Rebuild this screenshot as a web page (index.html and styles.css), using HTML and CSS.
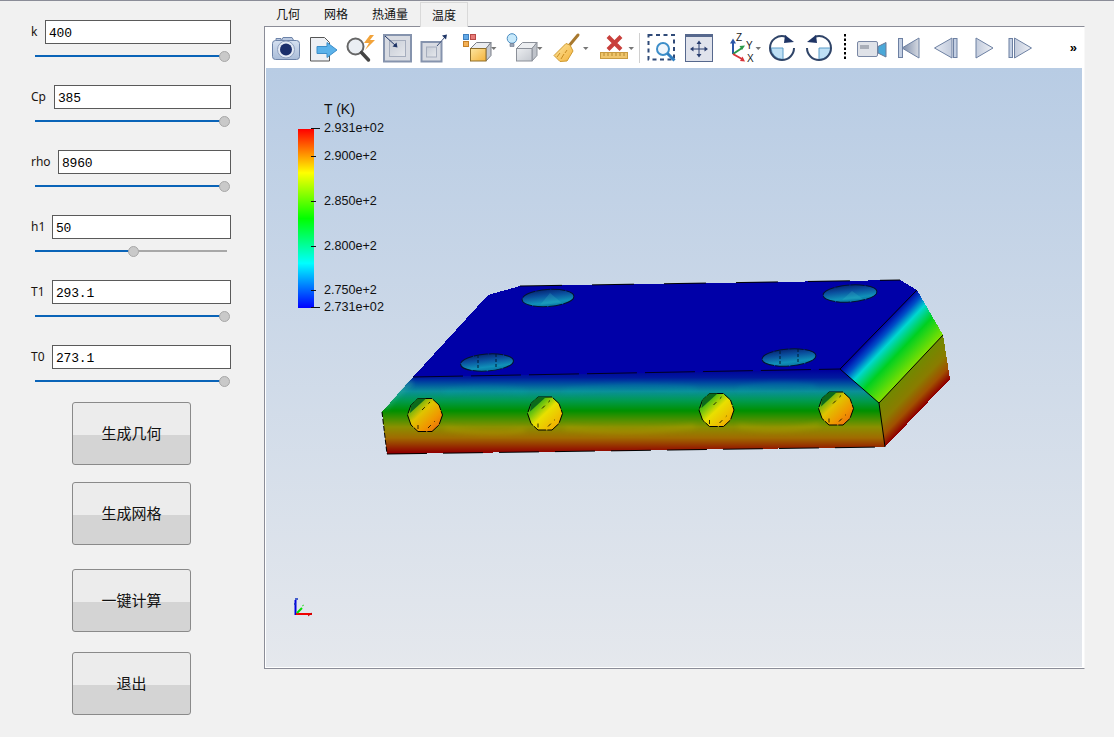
FILE: index.html
```html
<!DOCTYPE html>
<html lang="zh">
<head>
<meta charset="utf-8">
<title>温度</title>
<link rel="stylesheet" href="styles.css">
</head>
<body>
<svg class="shared-defs" aria-hidden="true">
  <defs>
    <linearGradient id="gCam" x1="0" y1="0" x2="0" y2="1"><stop offset="0" stop-color="#d5e0f0"/><stop offset="1" stop-color="#a9bcd8"/></linearGradient>
    <linearGradient id="gGold" x1="0" y1="0" x2="1" y2="1"><stop offset="0" stop-color="#fde6a0"/><stop offset="1" stop-color="#f4b23a"/></linearGradient>
    <linearGradient id="gGray" x1="0" y1="0" x2="1" y2="1"><stop offset="0" stop-color="#eceef1"/><stop offset="1" stop-color="#c4c8cf"/></linearGradient>
    <linearGradient id="gPanel" x1="0" y1="0" x2="1" y2="1"><stop offset="0" stop-color="#c6ccd6"/><stop offset="1" stop-color="#e6e8ec"/></linearGradient>
    <linearGradient id="gTriL" x1="0" y1="0" x2="1" y2="0"><stop offset="0" stop-color="#7b8ba8"/><stop offset="1" stop-color="#d6dae2"/></linearGradient>
    <linearGradient id="gTriLight" x1="0" y1="0" x2="1" y2="0"><stop offset="0" stop-color="#e6eaf2"/><stop offset="1" stop-color="#c2cbdc"/></linearGradient>
    <linearGradient id="gTriR" x1="0" y1="0" x2="1" y2="0"><stop offset="0" stop-color="#c2cbdc"/><stop offset="1" stop-color="#eef0f5"/></linearGradient>
  </defs>
</svg>

<div class="app">
  <aside class="side">
    <div class="field">
      <div class="row"><label class="lbl lbl-k">k</label><div class="input">400</div></div>
      <div class="slider"><div class="fill" style="width:98.5%"></div><div class="thumb" style="left:98.5%"></div></div>
    </div>
    <div class="field">
      <div class="row"><label class="lbl lbl-cp">Cp</label><div class="input">385</div></div>
      <div class="slider"><div class="fill" style="width:98.5%"></div><div class="thumb" style="left:98.5%"></div></div>
    </div>
    <div class="field">
      <div class="row"><label class="lbl lbl-rho">rho</label><div class="input">8960</div></div>
      <div class="slider"><div class="fill" style="width:98.5%"></div><div class="thumb" style="left:98.5%"></div></div>
    </div>
    <div class="field">
      <div class="row"><label class="lbl lbl-t">h1</label><div class="input">50</div></div>
      <div class="slider"><div class="fill" style="width:51%"></div><div class="thumb" style="left:51%"></div></div>
    </div>
    <div class="field">
      <div class="row"><label class="lbl lbl-t">T1</label><div class="input">293.1</div></div>
      <div class="slider"><div class="fill" style="width:98.5%"></div><div class="thumb" style="left:98.5%"></div></div>
    </div>
    <div class="field">
      <div class="row"><label class="lbl lbl-t">T0</label><div class="input">273.1</div></div>
      <div class="slider"><div class="fill" style="width:98.5%"></div><div class="thumb" style="left:98.5%"></div></div>
    </div>
    <button class="btn btn-a">生成几何</button>
    <button class="btn btn-b">生成网格</button>
    <button class="btn btn-c">一键计算</button>
    <button class="btn btn-d">退出</button>
  </aside>

  <main class="main">
    <nav class="tabs">
      <div class="tab">几何</div>
      <div class="tab">网格</div>
      <div class="tab">热通量</div>
      <div class="tab tab-on">温度</div>
    </nav>
    <section class="pane">
      <div class="toolbar">
        <svg class="ic w37" viewBox="268 27 37 41"><path d="M276 41v-2.500h5v2.500M281 41l2-3.500h9l2 3.500" fill="#b9c8e0" stroke="#6d83a8"/><rect x="272.500" y="40.500" width="27" height="19" rx="3" fill="url(#gCam)" stroke="#6d83a8"/><circle cx="286" cy="49.500" r="8.500" fill="#e3e9f4" stroke="#8ea0bf"/><circle cx="286" cy="49.500" r="6" fill="#1b2f6b"/></svg>
        <svg class="ic w36" viewBox="305 27 36 41"><path d="M310.500 37.500h14l5 5v18.500h-19z" fill="#eef0f4" stroke="#555"/><path d="M317 46.500h10v-4l10 7.500-10 7.500v-4h-10z" fill="#5bb2ea" stroke="#3d8ec9"/></svg>
        <svg class="ic w37" viewBox="341 27 37 41"><circle cx="355.500" cy="46.500" r="8" fill="#eaeef3" stroke="#666" stroke-width="2"/><path d="M361.500 52.500l7 7.500" stroke="#444" stroke-width="3.500" stroke-linecap="round"/><path d="M370 35l-6 8h5l-4 7 10-10h-5l4-5z" fill="#f2a33a"/></svg>
        <svg class="ic w37" viewBox="378 27 37 41"><rect x="384" y="35" width="27" height="26.500" fill="#d8dbe2" stroke="#8593ad" stroke-width="2"/><rect x="389.500" y="40.500" width="16" height="16" fill="url(#gPanel)" stroke="#a5adbd"/><path d="M385 36l11 10" stroke="#1f3566"/><path d="M397.500 47.500l-5-1 4-4z" fill="#1f3566"/></svg>
        <svg class="ic w37" viewBox="415 27 37 41"><rect x="421.500" y="42" width="20" height="19.500" fill="#d8dbe2" stroke="#8593ad" stroke-width="2"/><rect x="426.500" y="47" width="10" height="10" fill="url(#gPanel)" stroke="#a5adbd"/><path d="M437 46l8-9" stroke="#3c4f78"/><path d="M447 34.500l-1 5-4-4z" fill="#1f3566"/></svg>
        <svg class="ic w49" viewBox="452 27 49 41"><rect x="463.500" y="34.500" width="5" height="5" fill="#63a9e6" stroke="#3e7fc0"/><rect x="470.500" y="34.500" width="5" height="5" fill="#e87b78" stroke="#b84a48"/><rect x="463.500" y="41.500" width="5" height="5" fill="#f3b055" stroke="#c58028"/><path d="M470.500 48.500l6-6h14.500l-5 6z" fill="#eaecef" stroke="#7a7f88"/><path d="M486 48.500l5-6v13l-5 5.500z" fill="#c4c8cf" stroke="#7a7f88"/><rect x="470.500" y="48.500" width="15.500" height="12.500" fill="url(#gGold)" stroke="#8f6f2a"/><path d="M491 47h5.500l-2.750 3z" fill="#777"/></svg>
        <svg class="ic w47" viewBox="501 27 47 41"><circle cx="512" cy="38.500" r="4.800" fill="#c7e9fb" stroke="#4b8cc0"/><path d="M510 43.500h4v3h-4z" fill="#9aa6b8" stroke="#66738a" stroke-width=".6"/><path d="M516.500 48.500l6-6h14.500l-5 6z" fill="#eceef1" stroke="#8b9099"/><path d="M532 48.500l5-6v13l-5 5.500z" fill="#bfc3ca" stroke="#8b9099"/><rect x="516.500" y="48.500" width="15.500" height="12.500" fill="url(#gGray)" stroke="#8b9099"/><path d="M537 47h5.500l-2.750 3z" fill="#777"/></svg>
        <svg class="ic w44" viewBox="548 27 44 41"><path d="M578 35l-10 12" stroke="#a8792f" stroke-width="3" stroke-linecap="round"/><path d="M570 45l-4-1.500-12 12 6 6 7-.5 6-10z" fill="url(#gGold)" stroke="#cf9a30"/><path d="M560 53l-3 4M564 54l-3 5M567 50l-2 3" stroke="#c98d22"/><path d="M583 47h5.500l-2.750 3z" fill="#777"/></svg>
        <svg class="ic w47" viewBox="592 27 47 41"><path d="M608 36.500l13 13M621 36.500l-13 13" stroke="#c8403c" stroke-width="4"/><rect x="600.500" y="52.500" width="27" height="6" fill="#efc56c" stroke="#c89a40"/><path d="M604 53v3M608 53v3M612 53v3M616 53v3M620 53v3M624 53v3" stroke="#b48930"/><path d="M628.500 47h5.500l-2.750 3z" fill="#777"/></svg>
        <div class="sep"></div>
        <svg class="ic w38" viewBox="642 27 38 41"><rect x="648.500" y="35" width="25.500" height="24.500" fill="none" stroke="#2f4a78" stroke-width="2" stroke-dasharray="4 3.500"/><circle cx="663" cy="49" r="6" fill="#eff5fb" stroke="#3d8ec9" stroke-width="2"/><path d="M667.500 53.500l7 7" stroke="#2f7fc0" stroke-width="3"/></svg>
        <svg class="ic w37" viewBox="680 27 37 41"><rect x="685.500" y="35.500" width="27" height="26" fill="#e0e3ec" stroke="#56688d"/><rect x="685" y="34" width="28" height="3" fill="#56688d"/><path d="M699 43v12M692.500 49h13" stroke="#2a3f70"/><path d="M699 40.500l-2.500 3.500h5zM699 57.500l-2.500-3.500h5zM690 49l3.500-2.500v5zM708 49l-3.500-2.500v5z" fill="#2a3f70"/></svg>
        <svg class="ic w46" viewBox="717 27 46 41"><path d="M733 54V42" stroke="#2a56a8" stroke-width="2"/><path d="M733 38.500l-3 5h6z" fill="#2a56a8"/><path d="M733 54l9-6" stroke="#2a9a48" stroke-width="2"/><path d="M745 45.500l-5.500.5 2.500 4z" fill="#2a9a48"/><path d="M733 54l9 5" stroke="#d8343a" stroke-width="2"/><path d="M745 61.500l-2.500-5-2.500 4.500z" fill="#d8343a"/><text x="736" y="41" class="axis-txt">Z</text><text x="746" y="49" class="axis-txt">Y</text><text x="747" y="62" class="axis-txt">X</text><path d="M755.500 47h5.500l-2.750 3z" fill="#777"/></svg>
        <svg class="ic w37" viewBox="763 27 37 41"><path d="M783 48H771a12 12 0 0 0 12 11.500z" fill="#bfe0f5" stroke="#5a9cc8"/><path d="M786 36.700A12 12 0 0 0 770 48a12 12 0 0 0 24 0" fill="none" stroke="#2f4468" stroke-width="2"/><path d="M785 35l9 7-10 1z" fill="#1f3566"/></svg>
        <svg class="ic w37" viewBox="800 27 37 41"><path d="M819 48H831a12 12 0 0 1-12 11.500z" fill="#bfe0f5" stroke="#5a9cc8"/><path d="M815 36.700A12 12 0 0 1 831 48a12 12 0 0 1-24 0" fill="none" stroke="#2f4468" stroke-width="2"/><path d="M816 35l-9 7 10 1z" fill="#1f3566"/></svg>
        <svg class="ic w15" viewBox="837 27 15 41"><path d="M845 34v26.500" stroke="#000" stroke-width="2" stroke-dasharray="2.500 2"/></svg>
        <svg class="ic w38" viewBox="852 27 38 41"><rect x="857.500" y="41.500" width="20" height="15" rx="1.500" fill="#dfe2e8" stroke="#7a88a5"/><rect x="860" y="45" width="9" height="4" fill="#a9aeb8"/><path d="M878 46.500l8-4v14.500l-8-4z" fill="#4aa8d8" stroke="#6a7a98"/></svg>
        <svg class="ic w37" viewBox="890 27 37 41"><path d="M902 48l17-10v20z" fill="url(#gTriL)" stroke="#6d80a2"/><rect x="898.500" y="38.500" width="4" height="19" fill="#c3cfe3" stroke="#6d80a2"/></svg>
        <svg class="ic w38" viewBox="927 27 38 41"><path d="M934.500 48l17.500-10v20z" fill="url(#gTriLight)" stroke="#6d80a2"/><rect x="953.500" y="38.500" width="3.500" height="19" fill="#c3cfe3" stroke="#6d80a2"/></svg>
        <svg class="ic w37" viewBox="965 27 37 41"><path d="M976 38l17 10-17 10z" fill="url(#gTriR)" stroke="#6d80a2"/></svg>
        <svg class="ic w37" viewBox="1002 27 37 41"><rect x="1009" y="38.500" width="3.500" height="19" fill="#c3cfe3" stroke="#6d80a2"/><path d="M1014.500 38l17 10-17 10z" fill="url(#gTriR)" stroke="#6d80a2"/></svg>
        <span class="more">»</span>
      </div>

      <div class="view">
        <svg class="scene" viewBox="266 68 816 598" width="816" height="598">
          <defs>
            <linearGradient id="rainbow" x1="0" y1="0" x2="0" y2="1">
              <stop offset="0" stop-color="#ff0000"/><stop offset=".245" stop-color="#ffff00"/><stop offset=".5" stop-color="#00ff00"/><stop offset=".75" stop-color="#00ffff"/><stop offset="1" stop-color="#0000ff"/>
            </linearGradient>
            <linearGradient id="front" gradientUnits="userSpaceOnUse" x1="0" y1="370" x2="0" y2="455">
              <stop offset="0" stop-color="#00009c"/><stop offset=".09" stop-color="#001a9e"/><stop offset=".15" stop-color="#0048a0"/><stop offset=".25" stop-color="#0a8f9a"/><stop offset=".36" stop-color="#009a50"/><stop offset=".48" stop-color="#009000"/><stop offset=".67" stop-color="#8a9000"/><stop offset=".8" stop-color="#a06a00"/><stop offset=".97" stop-color="#8f0000"/>
            </linearGradient>
            <linearGradient id="chamfer" gradientUnits="userSpaceOnUse" x1="878" y1="330" x2="915" y2="365">
              <stop offset="0" stop-color="#0000a8"/><stop offset=".16" stop-color="#0050c8"/><stop offset=".33" stop-color="#00d8d0"/><stop offset=".6" stop-color="#00d020"/><stop offset="1" stop-color="#84e000"/>
            </linearGradient>
            <linearGradient id="rightFace" gradientUnits="userSpaceOnUse" x1="911" y1="369" x2="936" y2="393">
              <stop offset="0" stop-color="#6f8a00"/><stop offset=".45" stop-color="#8a7c00"/><stop offset=".75" stop-color="#a05000"/><stop offset="1" stop-color="#8f0000"/>
            </linearGradient>
            <linearGradient id="topHole" x1="0" y1="0" x2=".15" y2="1">
              <stop offset="0" stop-color="#041e6c"/><stop offset=".4" stop-color="#0a4f9e"/><stop offset=".82" stop-color="#1090b8"/><stop offset="1" stop-color="#0a7ea8"/>
            </linearGradient>
            <linearGradient id="holeWarm" x1="0" y1="0" x2="1" y2="1">
              <stop offset="0" stop-color="#0f7a1e"/><stop offset=".2" stop-color="#5cb010"/><stop offset=".42" stop-color="#e0c400"/><stop offset=".68" stop-color="#f09800"/><stop offset="1" stop-color="#e85c10"/>
            </linearGradient>
            <linearGradient id="holeCool" x1="0" y1="0" x2="1" y2="1">
              <stop offset="0" stop-color="#0f7a1e"/><stop offset=".28" stop-color="#5cc010"/><stop offset=".5" stop-color="#e8e000"/><stop offset=".8" stop-color="#f0b800"/><stop offset="1" stop-color="#e88c10"/>
            </linearGradient>
            <filter id="soft" x="-20%" y="-100%" width="140%" height="300%"><feGaussianBlur stdDeviation="2.500"/></filter>
            <clipPath id="frontClip"><path d="M382 412L412 377 840 369 879 403 885 447 387 454z"/></clipPath>
            <g id="holeShape">
              <path d="M-7-16.500L7-16.500 14-10 17.500 0 14 10 7 16.500-7 16.500-14 10-17.500 0-14-10z" stroke="#000" stroke-width="1" stroke-dasharray="14 1"/>
              <path d="M-7-16.500L1-16.500-15-2-14-10z" fill="#0c6a1c"/>
              <path d="M-7 14V8M3 13L10 6M-3 -5L5 -13" stroke="#000" stroke-width=".8" stroke-dasharray="4 5" fill="none"/>
            </g>
          </defs>

          <text x="324" y="114" class="bar-title">T (K)</text>
          <rect x="298" y="129" width="16" height="179" fill="url(#rainbow)"/>
          <g stroke="#111" stroke-width="1">
            <path d="M311 128.500h9M311 156.500h5M311 201.500h5M311 246.500h5M311 290.500h5M311 307.500h9"/>
          </g>
          <g class="bar-txt">
            <text x="324" y="132">2.931e+02</text>
            <text x="324" y="160">2.900e+2</text>
            <text x="324" y="205">2.850e+2</text>
            <text x="324" y="250">2.800e+2</text>
            <text x="324" y="294">2.750e+2</text>
            <text x="324" y="311">2.731e+02</text>
          </g>

          <g shape-rendering="crispEdges">
            <path d="M413 377L488 295 520 286 900 280 917 290 840 369z" fill="#0000a8"/>
            <path d="M382 412L413 377 840 369 879 403 885 447 387 454z" fill="url(#front)"/>
            <path d="M840 369L917 290 943 335 879 403z" fill="url(#chamfer)"/>
            <path d="M879 403L943 335 950 379 885 447z" fill="url(#rightFace)"/>
          </g>

          <g clip-path="url(#frontClip)" filter="url(#soft)" fill="none">
            <path d="M445 392Q490 384 525 392M565 391Q630 382 695 389M738 389Q780 381 815 387" stroke="#18a8a8" stroke-width="3" opacity=".3"/>
            <path d="M445 428Q490 436 525 430M565 428Q630 436 695 426M738 426Q780 434 820 424" stroke="#c0b000" stroke-width="3" opacity=".4"/>
            <path d="M384 408Q396 392 412 382" stroke="#40c0a0" stroke-width="6" opacity=".4"/>
          </g>

          <g fill="none" stroke="#000" stroke-width="1">
            <path d="M520 286L900 280" stroke-dasharray="42 30"/>
            <path d="M413 377L840 369" stroke-dasharray="50 8" stroke-opacity=".8"/>
            <path d="M840 369L917 290"/>
            <path d="M840 369L879 403 885 447"/>
            <path d="M879 403L943 335"/>
            <path d="M387 454L885 447" stroke-dasharray="40 16"/>
            <path d="M382 412L387 454" stroke-dasharray="5 2"/>
          </g>

          <g stroke="#03142e" stroke-width="1" stroke-dasharray="14 1">
            <ellipse cx="548" cy="298" rx="26" ry="8.500" transform="rotate(-4 548 298)" fill="url(#topHole)"/>
            <ellipse cx="487" cy="362.500" rx="26.500" ry="8.500" transform="rotate(-4 487 362.500)" fill="url(#topHole)"/>
            <ellipse cx="850" cy="293.500" rx="27" ry="8.500" transform="rotate(-4 850 293.500)" fill="url(#topHole)"/>
            <ellipse cx="789" cy="357.500" rx="27" ry="8.500" transform="rotate(-4 789 357.500)" fill="url(#topHole)"/>
          </g>
          <path d="M478 355v14M496 354v14M780 351v13M798 349v13" stroke="#001830" stroke-dasharray="3 2" fill="none"/>
          <path d="M540 305l10-12 12 10zM842 300l10-9 11 8z" fill="#3fc4c8" opacity=".22"/>

          <use href="#holeShape" x="425" y="415" fill="url(#holeWarm)"/>
          <use href="#holeShape" x="545" y="413.500" fill="url(#holeCool)"/>
          <use href="#holeShape" x="716.500" y="410" fill="url(#holeCool)"/>
          <use href="#holeShape" x="836" y="408.500" fill="url(#holeWarm)"/>

          <g fill="none">
            <path d="M295.500 600v15" stroke="#0000e0" stroke-width="2"/>
            <path d="M294 604h2M295 599h3" stroke="#1030c0" stroke-width="1.500"/>
            <path d="M296 614h16" stroke="#f00000" stroke-width="2"/>
            <path d="M308 616l4-3" stroke="#c00000"/>
            <path d="M297 613l5-5" stroke="#00e000" stroke-width="2"/>
            <path d="M302 606l2-1" stroke="#40e040"/>
          </g>
        </svg>
      </div>
    </section>
  </main>
</div>
</body>
</html>
```
FILE: styles.css
```css
* { box-sizing: border-box; }
html, body { margin: 0; height: 100%; }
body {
  background: #f1f1f1;
  border-top: 1px solid #8b8d98;
  font-family: "Noto Sans", "Noto Sans CJK SC", sans-serif;
  overflow: hidden;
}
.shared-defs { position: absolute; width: 0; height: 0; }
.app { display: flex; height: 736px; }

.side {
  width: 264px;
  flex: none;
  padding: 19px 33px 0 31px;
  display: flex;
  flex-direction: column;
  gap: 23px;
}
.field { height: 42px; flex: none; }
.row { display: flex; align-items: center; height: 24px; }
.lbl { font: 12px "Noto Sans", sans-serif; color: #1a1410; flex: none; position: relative; top: -1px; }
.lbl-k { width: 14px; }
.lbl-cp { width: 23px; }
.lbl-rho { width: 27px; }
.lbl-t { width: 21px; }
.input {
  flex: 1;
  height: 24px;
  background: #fff;
  border: 1px solid #5a5a5a;
  padding: 1px 0 0 3px;
  font: 13px/23px "Liberation Mono", monospace;
  letter-spacing: -.2px;
  color: #000;
}
.slider {
  position: relative;
  height: 2px;
  width: 192px;
  margin: 11px 0 0 4px;
  background: #a8a8a8;
}
.fill { height: 2px; background: #0a64b8; }
.thumb {
  position: absolute;
  top: -4px;
  width: 11px;
  height: 11px;
  margin-left: -5px;
  border-radius: 50%;
  background: #c9c9c9;
  border: 1px solid #a8a8a8;
}

.btn {
  flex: none;
  width: 119px;
  height: 63px;
  margin-left: 41px;
  padding: 0 0 3px;
  border: 1px solid #8a8a8a;
  border-radius: 3px;
  background: linear-gradient(#ececec 0, #ececec 52%, #d4d4d4 52%, #d4d4d4 100%);
  font: 15px "Noto Sans CJK SC", sans-serif;
  color: #111;
}
.btn-a { margin-top: -8px; }
.btn-b { margin-top: -6px; }
.btn-c { margin-top: 1px; }
.btn-d { margin-top: -3px; }

.main { width: 821px; flex: none; display: flex; flex-direction: column; }
.tabs {
  display: flex;
  height: 25px;
  padding-top: 1px;
  font: 12px/24px "Noto Sans CJK SC", sans-serif;
  color: #111;
}
.tab { padding: 0 12px; text-align: center; }
.tab-on {
  position: relative;
  height: 25px;
  background: #f1f1f1;
  border: 1px solid #d9d9d9;
  border-bottom: none;
  padding: 0 11px;
  line-height: 23px;
}
.pane {
  height: 643px;
  background: #fff;
  border: 1px solid #8b8d98;
  border-right: 1px solid #f8f8f8;
  padding: 0 2px 1px 1px;
  display: flex;
  flex-direction: column;
}
.toolbar {
  height: 41px;
  flex: none;
  margin-left: -1px;
  padding-left: 3px;
  display: flex;
  align-items: center;
  position: relative;
}
.ic { display: block; height: 41px; flex: none; }
.w15 { width: 15px; } .w36 { width: 36px; } .w37 { width: 37px; } .w38 { width: 38px; }
.w44 { width: 44px; } .w46 { width: 46px; } .w47 { width: 47px; } .w49 { width: 49px; }
.sep { width: 1px; height: 30px; margin: 0 2px 0 0; background: #d0d0d0; flex: none; }
.axis-txt { font: 10px "Liberation Sans", sans-serif; fill: #222; }
.more {
  margin-left: auto;
  margin-right: 5px;
  font: bold 13px "Liberation Sans", sans-serif;
  color: #000;
  line-height: 41px;
}
.view {
  flex: 1;
  background: linear-gradient(#b8cce4 0, #e5e8ed 100%);
}
.scene { display: block; }
.bar-title { font: 14px "Liberation Sans", sans-serif; fill: #111; }
.bar-txt { font: 12.6px "Liberation Sans", sans-serif; fill: #111; }
```
